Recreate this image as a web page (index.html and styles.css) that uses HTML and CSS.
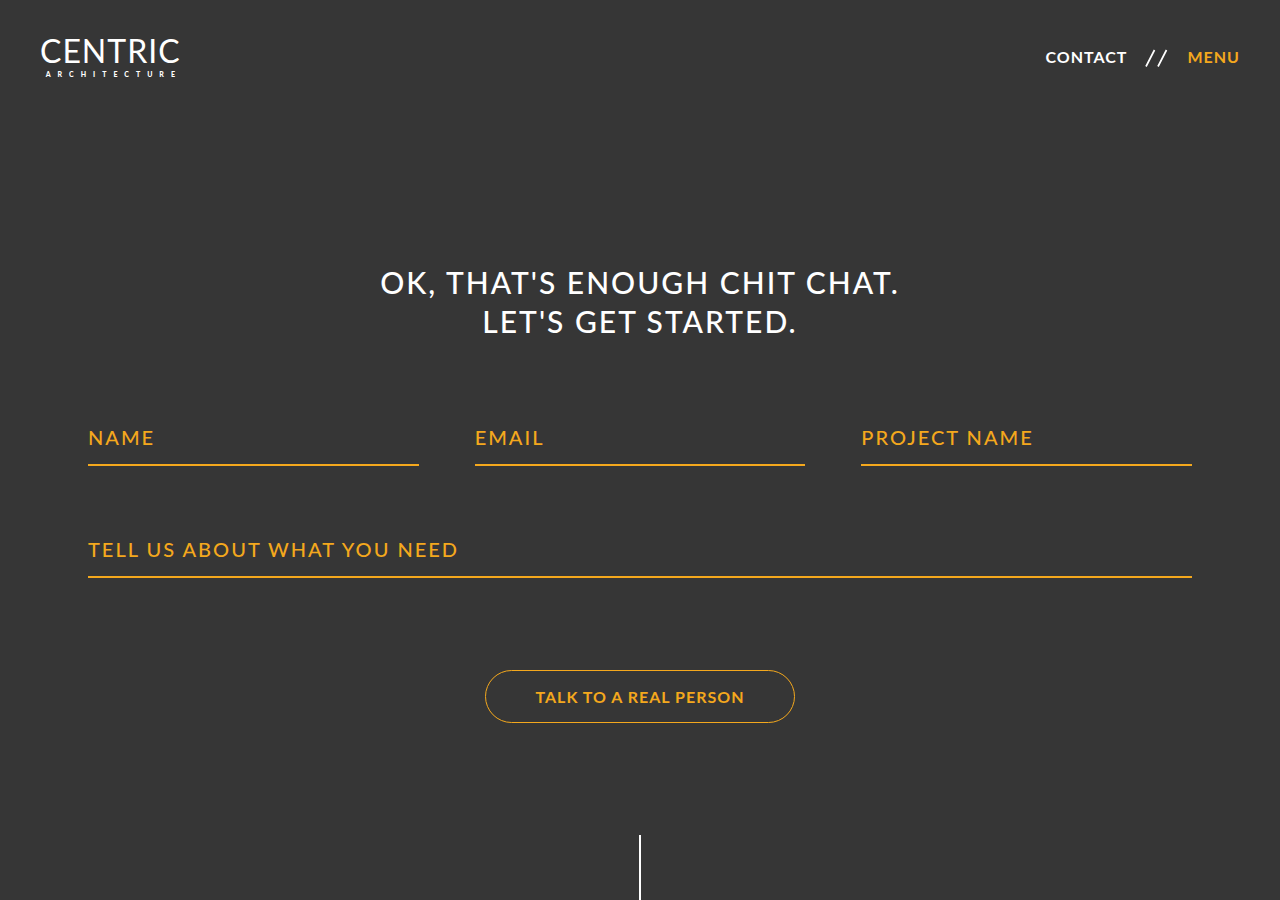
FILE: index.html
```
<!DOCTYPE html>
<html lang="en">
<head>
    <meta charset="utf-8">
    <title>Centric Architecture</title>
    <meta name="viewport" content="width=device-width, initial-scale=1.0">
    <link rel="stylesheet" href="styles.css">
</head>
<body>
    <header class="site-header">
        <a href="#" class="logo">
            <span class="logo-name">CENTRIC</span>
            <span class="logo-sub">ARCHITECTURE</span>
        </a>
        <nav class="site-nav">
            <a href="#contact">CONTACT</a>
            <svg class="slashes" width="24" height="20" viewBox="0 0 24 20" aria-hidden="true">
                <path d="M1 19.5 L9.5 3 M13 19.5 L21.5 3" fill="none" stroke="#fff" stroke-width="1.7"/>
            </svg>
            <button type="button" class="menu-button">MENU</button>
        </nav>
    </header>

    <main class="contact" id="contact">
        <h1>OK, THAT'S ENOUGH CHIT CHAT.<br>LET'S GET STARTED.</h1>

        <form class="contact-form">
            <div class="field">
                <input type="text" id="name" name="name" placeholder=" ">
                <label for="name">NAME</label>
            </div>
            <div class="field">
                <input type="email" id="email" name="email" placeholder=" ">
                <label for="email">EMAIL</label>
            </div>
            <div class="field">
                <input type="text" id="project" name="project" placeholder=" ">
                <label for="project">PROJECT NAME</label>
            </div>
            <div class="field field-wide">
                <input type="text" id="message" name="message" placeholder=" ">
                <label for="message">TELL US ABOUT WHAT YOU NEED</label>
            </div>
            <button type="submit" class="submit-button">TALK TO A REAL PERSON</button>
        </form>

        <div class="scroll-line"></div>
    </main>
</body>
</html>
```

FILE: styles.css
```
* {
    box-sizing: border-box;
}

body {
    display: flex;
    flex-direction: column;
    min-height: 100vh;
    margin: 0;
    background-color: #363636;
    color: #fff;
    font-family: Lato, sans-serif;
}

a {
    color: inherit;
    text-decoration: none;
}

button,
input {
    font-family: inherit;
}

/* Header */

.site-header {
    display: flex;
    justify-content: space-between;
    align-items: flex-start;
    padding: 40px 40px 0;
}

.logo {
    display: flex;
    flex-direction: column;
    align-items: center;
}

.logo-name {
    font-size: 32px;
    line-height: 22px;
    letter-spacing: 1px;
}

.logo-sub {
    padding-top: 8px;
    font-size: 7px;
    font-weight: 900;
    line-height: 8px;
    letter-spacing: 7px;
    margin-right: -7px;
}

.site-nav {
    display: flex;
    align-items: center;
    gap: 18px;
    padding-top: 7px;
    font-size: 16px;
    font-weight: 700;
    line-height: 20px;
    letter-spacing: 1px;
}

.menu-button {
    padding: 0;
    border: none;
    background: none;
    color: #f4a81d;
    font-size: 16px;
    font-weight: 700;
    line-height: 20px;
    letter-spacing: 1px;
    cursor: pointer;
}

/* Contact form */

.contact {
    display: flex;
    flex: 1;
    flex-direction: column;
    padding: 185px 88px 0;
}

h1 {
    margin: 0 0 77px;
    font-size: 30px;
    font-weight: 500;
    line-height: 39px;
    letter-spacing: 2px;
    text-align: center;
}

.contact-form {
    display: grid;
    grid-template-columns: repeat(3, 1fr);
    gap: 64px 56px;
}

.field {
    display: grid;
}

.field input,
.field label {
    grid-area: 1 / 1;
}

.field input {
    width: 100%;
    height: 48px;
    padding: 0 0 8px;
    border: none;
    border-bottom: 2px solid #f4a81d;
    border-radius: 0;
    outline: none;
    background: none;
    color: #fff;
    font-size: 20px;
}

.field label {
    padding-top: 6px;
    color: #f4a81d;
    font-size: 20px;
    font-weight: 500;
    line-height: 26px;
    letter-spacing: 2px;
    pointer-events: none;
}

.field input:focus + label,
.field input:not(:placeholder-shown) + label {
    visibility: hidden;
}

.field-wide {
    grid-column: 1 / -1;
}

.submit-button {
    grid-column: 1 / -1;
    justify-self: center;
    margin-top: 28px;
    padding: 16px 50px;
    border: 1px solid #f4a81d;
    border-radius: 27px;
    background: none;
    color: #f4a81d;
    font-size: 16px;
    font-weight: 700;
    line-height: 19px;
    letter-spacing: 1px;
    cursor: pointer;
}

.scroll-line {
    flex: 1;
    width: 2px;
    min-height: 64px;
    margin: 112px auto 0;
    background-color: #fff;
}

@media (max-width: 700px) {
    .contact {
        padding: 96px 24px 0;
    }

    .contact-form {
        grid-template-columns: 1fr;
    }
}
```
